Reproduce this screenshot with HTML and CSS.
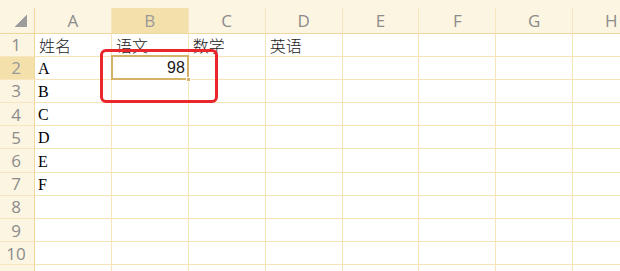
FILE: index.html
```html
<!DOCTYPE html>
<html lang="zh">
<head>
<meta charset="utf-8">
<link rel="stylesheet" href="styles.css">
</head>
<body>
<div class="sheet">
  <div class="topstrip"></div>
  <div class="grid">
    <div class="corner"></div>
    <div class="ch">A</div>
    <div class="ch sel">B</div>
    <div class="ch">C</div>
    <div class="ch">D</div>
    <div class="ch">E</div>
    <div class="ch">F</div>
    <div class="ch">G</div>
    <div class="ch">H</div>

    <div class="rh">1</div>
    <div class="c cjk">姓名</div><div class="c cjk">语文</div><div class="c cjk">数学</div><div class="c cjk">英语</div><div class="c"></div><div class="c"></div><div class="c"></div><div class="c"></div>

    <div class="rh sel">2</div>
    <div class="c lat">A</div><div class="c num active">98<span class="handle"></span></div><div class="c"></div><div class="c"></div><div class="c"></div><div class="c"></div><div class="c"></div><div class="c"></div>

    <div class="rh">3</div>
    <div class="c lat">B</div><div class="c"></div><div class="c"></div><div class="c"></div><div class="c"></div><div class="c"></div><div class="c"></div><div class="c"></div>

    <div class="rh">4</div>
    <div class="c lat">C</div><div class="c"></div><div class="c"></div><div class="c"></div><div class="c"></div><div class="c"></div><div class="c"></div><div class="c"></div>

    <div class="rh">5</div>
    <div class="c lat">D</div><div class="c"></div><div class="c"></div><div class="c"></div><div class="c"></div><div class="c"></div><div class="c"></div><div class="c"></div>

    <div class="rh">6</div>
    <div class="c lat">E</div><div class="c"></div><div class="c"></div><div class="c"></div><div class="c"></div><div class="c"></div><div class="c"></div><div class="c"></div>

    <div class="rh">7</div>
    <div class="c lat">F</div><div class="c"></div><div class="c"></div><div class="c"></div><div class="c"></div><div class="c"></div><div class="c"></div><div class="c"></div>

    <div class="rh">8</div>
    <div class="c"></div><div class="c"></div><div class="c"></div><div class="c"></div><div class="c"></div><div class="c"></div><div class="c"></div><div class="c"></div>

    <div class="rh">9</div>
    <div class="c"></div><div class="c"></div><div class="c"></div><div class="c"></div><div class="c"></div><div class="c"></div><div class="c"></div><div class="c"></div>

    <div class="rh">10</div>
    <div class="c"></div><div class="c"></div><div class="c"></div><div class="c"></div><div class="c"></div><div class="c"></div><div class="c"></div><div class="c"></div>

    <div class="rh">11</div>
    <div class="c"></div><div class="c"></div><div class="c"></div><div class="c"></div><div class="c"></div><div class="c"></div><div class="c"></div><div class="c"></div>
  </div>
  <div class="mark"></div>
</div>
</body>
</html>
```
FILE: styles.css
```css
html, body {
  margin: 0;
  padding: 0;
  background: #ffffff;
  overflow: hidden;
}
.sheet {
  position: relative;
  width: 620px;
  height: 271px;
  overflow: hidden;
}
.topstrip {
  height: 8px;
  background: #fcf5e2;
}
.grid {
  display: grid;
  grid-template-columns: 35px repeat(8, 76.9px);
  grid-template-rows: 25.5px repeat(11, 23.2px);
}
.grid > div {
  box-sizing: border-box;
  border-right: 1px solid #f6e4b6;
  border-bottom: 1px solid #f6e4b6;
  overflow: hidden;
  white-space: nowrap;
}
.grid > .corner {
  background:
    linear-gradient(to bottom right, rgba(160, 160, 160, 0) 50%, #9d9d9d 50%) 15px 7px / 12px 12px no-repeat,
    #fcf5e2;
  border-right-color: #f0d79c;
  border-bottom-color: #f0d79c;
}
.ch {
  background: #fcf5e2;
  border-right-color: #f7e7c0 !important;
  border-bottom-color: #f0d79c !important;
  display: flex;
  align-items: center;
  justify-content: center;
  font-family: "Open Sans", "Noto Sans", sans-serif;
  font-size: 17px;
  color: #8c8c8c;
}
.rh {
  background: #fcf5e2;
  border-right-color: #f0d79c !important;
  border-bottom-color: #f7e7c0 !important;
  display: flex;
  align-items: center;
  justify-content: center;
  font-family: "Open Sans", "Noto Sans", sans-serif;
  font-size: 17px;
  color: #8c8c8c;
  padding-right: 2px;
}
.ch.sel, .rh.sel {
  background: #f3e0ab;
  color: #9a9a9a;
}
.c {
  position: relative;
  display: flex;
  align-items: flex-end;
  padding: 0 3px 1px 4px;
  color: #111111;
}
.cjk {
  font-family: "Noto Sans CJK SC", sans-serif;
  font-weight: 300;
  font-size: 16px;
  line-height: 20px;
  color: #222222;
}
.lat {
  font-family: "Liberation Serif", serif;
  font-size: 16px;
  line-height: 19px;
  padding-left: 3px;
  color: #000000;
}
.num {
  justify-content: flex-end;
  font-family: "Liberation Sans", "Noto Sans", sans-serif;
  font-size: 16px;
  line-height: 20px;
  color: #1a1a1a;
}
.active {
  overflow: visible !important;
  z-index: 2;
}
.active::before {
  content: "";
  position: absolute;
  left: -1px;
  top: -2px;
  right: -1px;
  bottom: -1px;
  border: 2px solid #d4b368;
  pointer-events: none;
}
.handle {
  position: absolute;
  right: -3px;
  bottom: -3px;
  width: 5px;
  height: 5px;
  background: #d4b368;
  border: 1px solid #ffffff;
  box-sizing: border-box;
}
.mark {
  position: absolute;
  left: 100px;
  top: 49px;
  width: 118px;
  height: 54px;
  box-sizing: border-box;
  border: 3px solid #e8262b;
  border-radius: 6px;
  z-index: 5;
}
```
